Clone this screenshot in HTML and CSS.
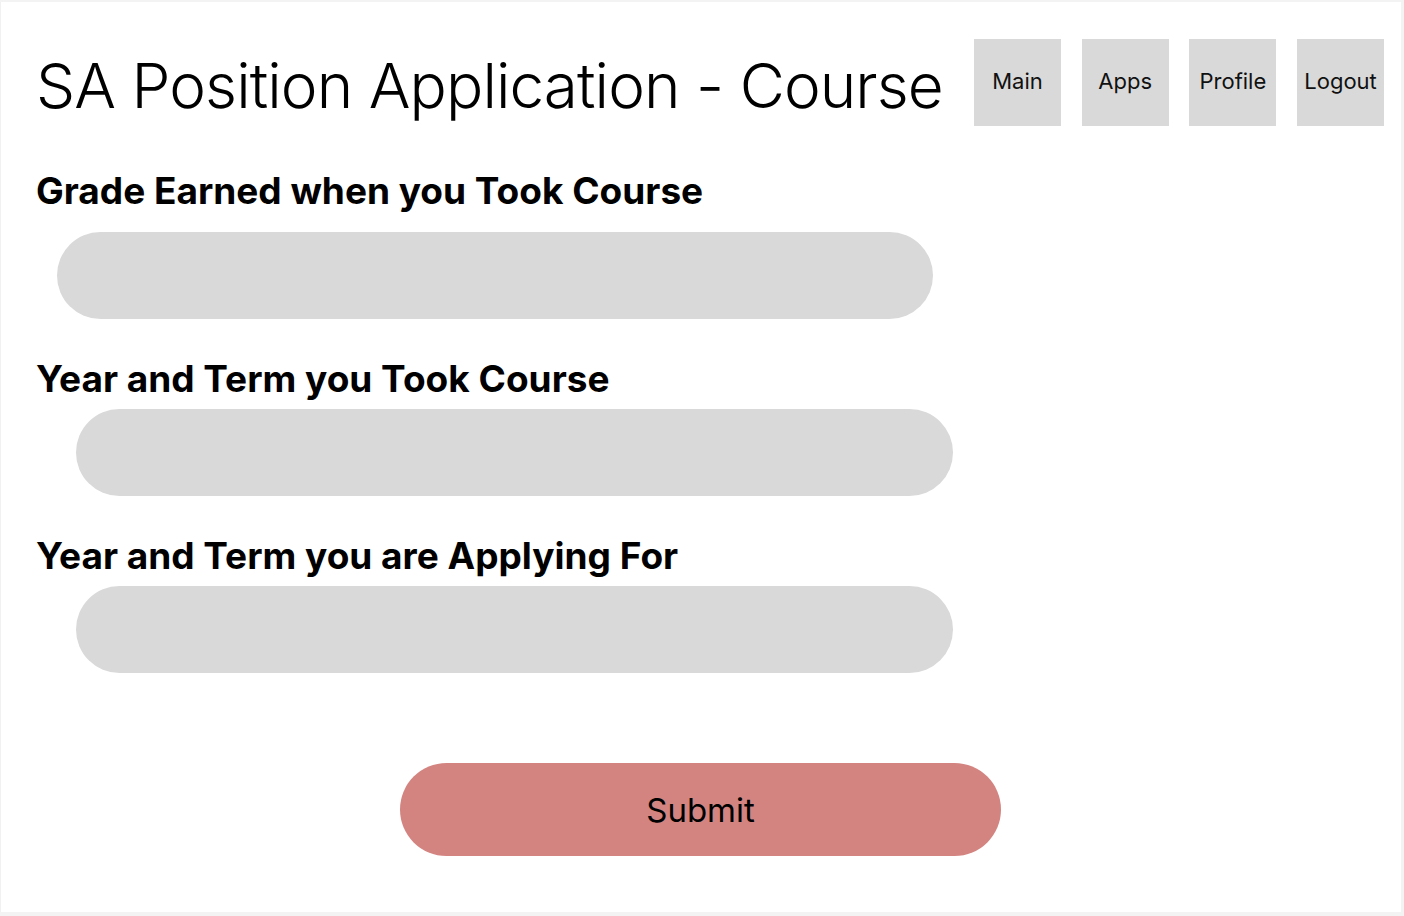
FILE: index.html
```html
<!DOCTYPE html>
<html lang="en">
<head>
<meta charset="utf-8">
<title>SA Position Application - Course</title>
<link rel="stylesheet" href="styles.css">
</head>
<body>
<div class="frame">
  <header class="header">
    <h1 class="title">SA Position Application - Course</h1>
    <nav class="nav">
      <a class="nav-btn" href="#">Main</a>
      <a class="nav-btn" href="#">Apps</a>
      <a class="nav-btn" href="#">Profile</a>
      <a class="nav-btn" href="#">Logout</a>
    </nav>
  </header>
  <form class="form">
    <label class="label label-1">Grade Earned when you Took Course</label>
    <input class="field field-1" type="text">
    <label class="label label-2">Year and Term you Took Course</label>
    <input class="field field-2" type="text">
    <label class="label label-3">Year and Term you are Applying For</label>
    <input class="field field-3" type="text">
    <div class="submit-row">
      <button class="submit" type="button">Submit</button>
    </div>
  </form>
</div>
</body>
</html>
```
FILE: styles.css
```css
* { box-sizing: border-box; }
html, body { margin: 0; padding: 0; }
body {
  background: #f3f3f3;
  font-family: Inter, "Noto Sans", sans-serif;
  color: #000;
  width: 1404px;
  height: 916px;
  overflow: hidden;
}
.frame {
  margin-top: 2px;
  width: 1401px;
  height: 910px;
  background: #fff;
  border-left: 1px solid #f1f1f1;
}
.header {
  display: flex;
  align-items: flex-start;
  padding-top: 37px;
}
.title {
  margin: 0;
  margin-left: 35px;
  margin-top: 9px;
  font-size: 62px;
  font-weight: 300;
  letter-spacing: -0.92px;
  line-height: 75px;
  white-space: nowrap;
  width: 938px;
}
.nav {
  display: flex;
  gap: 20.7px;
}
.nav-btn {
  width: 87px;
  height: 87px;
  background: #d9d9d9;
  color: #111;
  text-decoration: none;
  font-size: 22px;
  display: flex;
  align-items: center;
  justify-content: center;
  padding-bottom: 3px;
}
.form {
  display: flex;
  flex-direction: column;
  align-items: flex-start;
  padding-left: 35px;
}
.label {
  font-size: 37px;
  font-weight: 700;
  line-height: 45px;
  white-space: nowrap;
}
.label-1 { margin-top: 42px; }
.label-2, .label-3 { margin-top: 37px; }
.field {
  display: block;
  border: none;
  outline: none;
  background: #d9d9d9;
  height: 87px;
  border-radius: 44px;
  width: 877px;
}
.field-1 { margin-left: 21px; width: 876px; margin-top: 19px; }
.field-2, .field-3 { margin-left: 40px; margin-top: 8px; }
.submit-row {
  align-self: stretch;
  display: flex;
  margin-top: 90px;
}
.submit {
  margin-left: 364px;
  width: 601px;
  height: 93px;
  border: none;
  border-radius: 47px;
  background: #d38480;
  color: #000;
  font-family: Inter, "Noto Sans", sans-serif;
  font-size: 33px;
  font-weight: 400;
  padding: 0;
}
```
